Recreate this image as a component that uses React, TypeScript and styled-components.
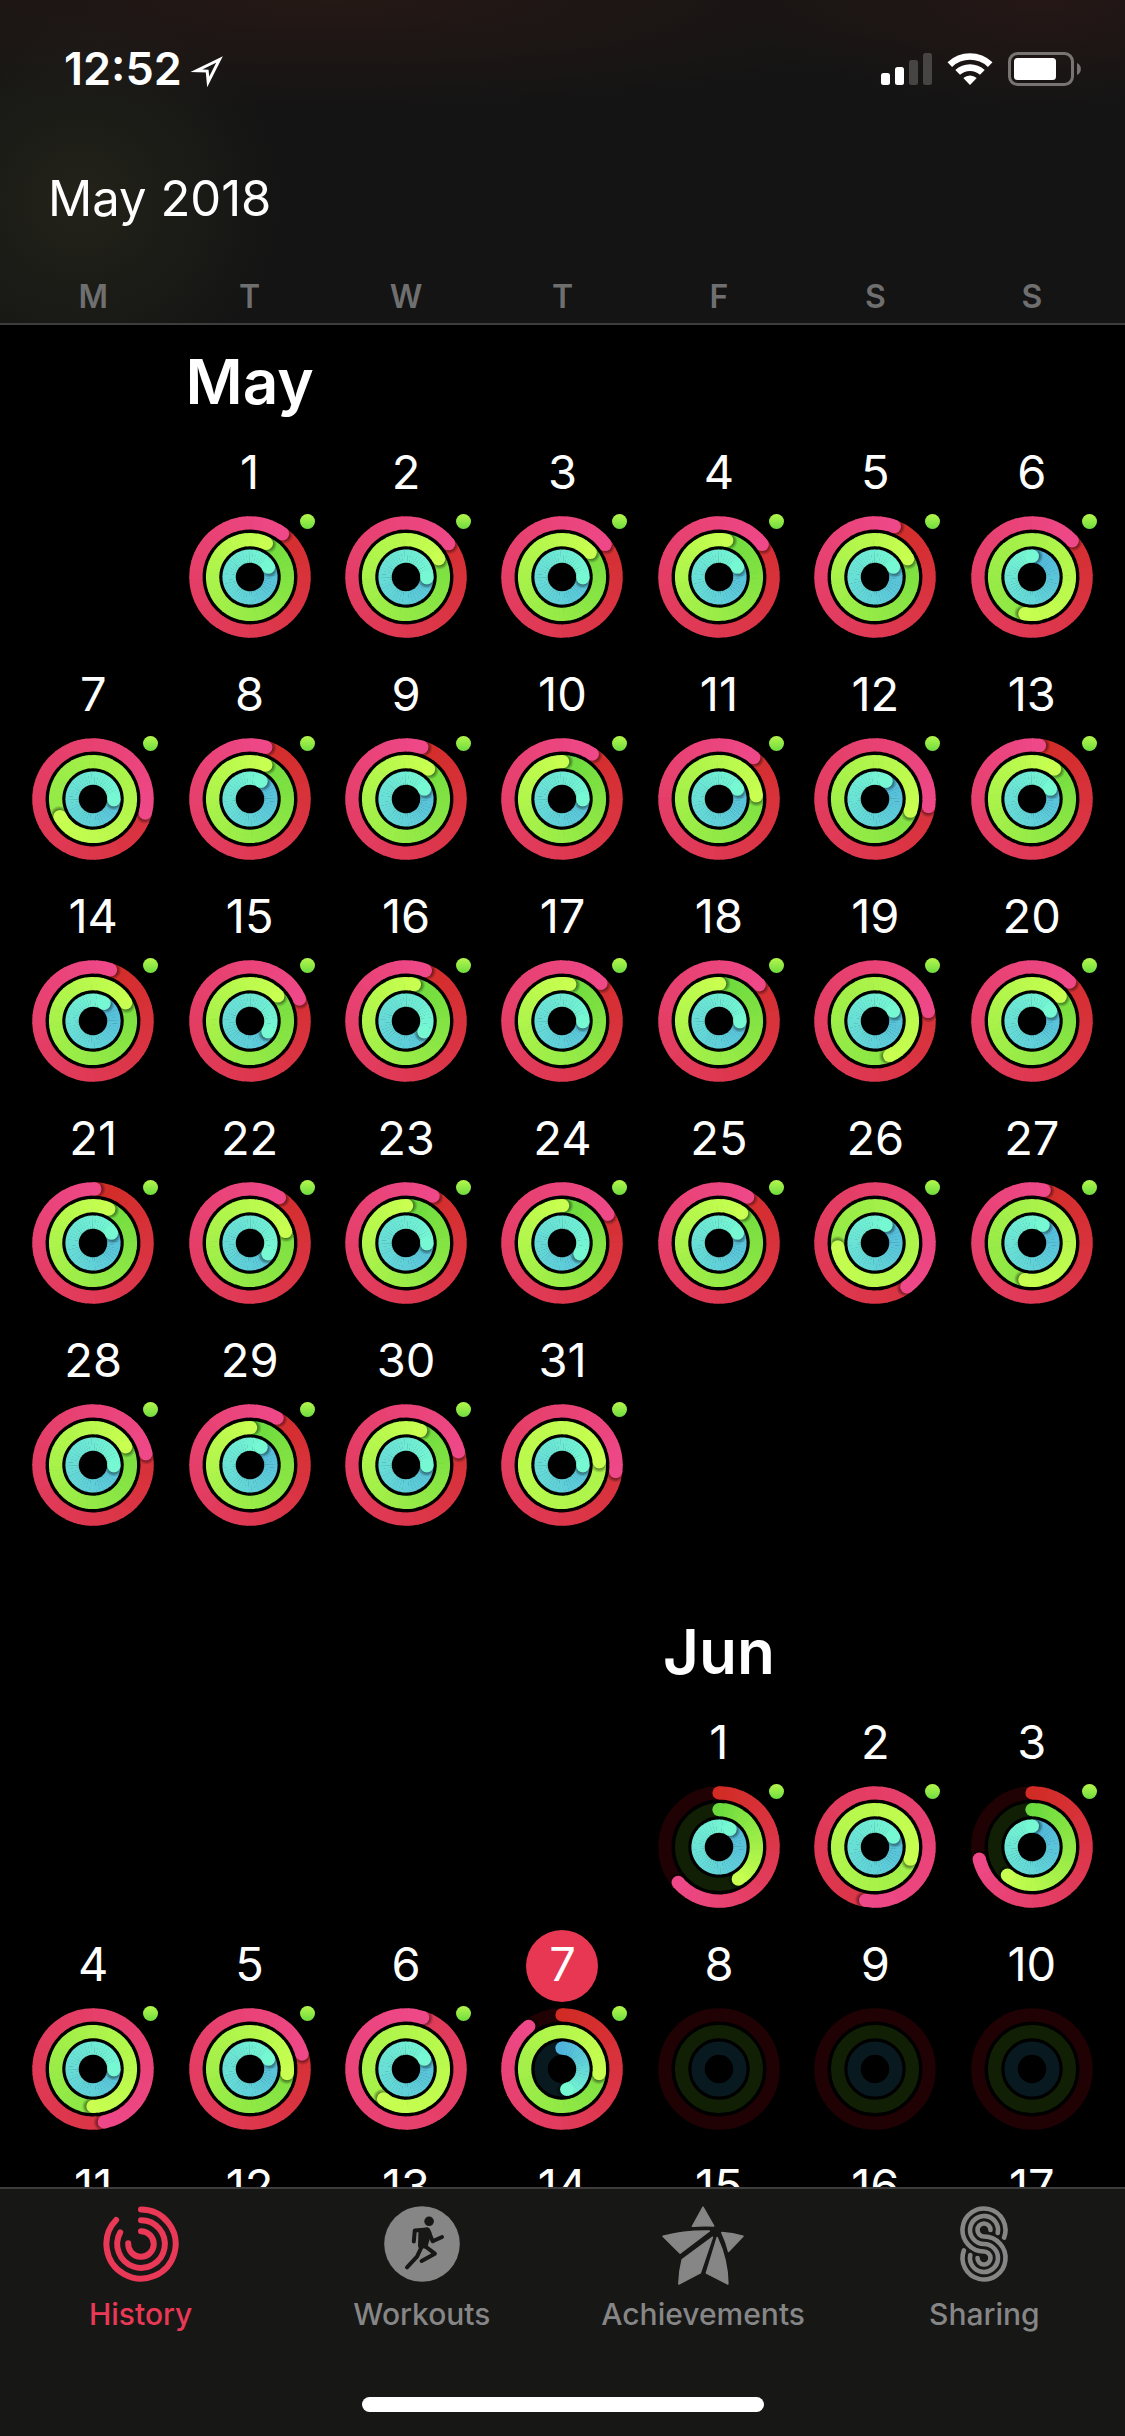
import React from "react";
import styled, { createGlobalStyle } from "styled-components";

const GlobalStyle = createGlobalStyle`
  * { box-sizing: border-box; }
  body {
    margin: 0;
    background: #000;
    color: #fff;
    font-family: Inter, "Liberation Sans", sans-serif;
  }
  button {
    margin: 0;
    padding: 0;
    border: 0;
    background: none;
    color: inherit;
    font: inherit;
    cursor: pointer;
  }
`;

const Screen = styled.div`
  display: flex;
  flex-direction: column;
  height: 100vh;
  overflow: hidden;
`;

const Header = styled.header`
  flex: none;
  padding-bottom: 6px;
  border-bottom: 2px solid #3d3d3d;
  background:
    radial-gradient(ellipse 200px 190px at 80px 200px, #23231a, transparent),
    radial-gradient(ellipse 640px 110px at 330px 0, #251815, transparent),
    radial-gradient(ellipse 300px 110px at 1040px 0, #251715, transparent),
    #141414;
`;

const StatusBar = styled.div`
  display: flex;
  align-items: center;
  justify-content: space-between;
  height: 138px;
  padding: 0 44px 0 64px;
`;

const StatusGroup = styled.div<{ $gap: number }>`
  display: flex;
  align-items: center;
  gap: ${(p) => p.$gap}px;
`;

const Clock = styled.time`
  font-size: 45px;
  line-height: 56px;
  font-weight: 600;
`;

const Title = styled.h1`
  margin: 0;
  padding: 29px 48px 0;
  font-size: 49px;
  line-height: 64px;
  font-weight: 400;
`;

const Weekdays = styled.div`
  display: grid;
  grid-template-columns: repeat(7, 1fr);
  margin-top: 46px;
  padding: 0 15px;
  color: #6f6f6f;
  font-size: 32px;
  line-height: 40px;
  font-weight: 600;
  text-align: center;
`;

const Calendar = styled.main`
  flex: 1;
  min-height: 0;
  display: flex;
  flex-direction: column;
  gap: 64px;
  padding: 17px 15px 0;
  overflow-y: auto;
  scrollbar-width: none;
`;

const MonthGrid = styled.section`
  flex: none;
  display: grid;
  grid-template-columns: repeat(7, 1fr);
`;

const MonthName = styled.h2<{ $column: number }>`
  grid-column: ${(p) => p.$column};
  margin: 0 0 16px;
  font-size: 62px;
  line-height: 80px;
  font-weight: 600;
  text-align: center;
`;

const DayCell = styled.button<{ $column?: number }>`
  grid-column-start: ${(p) => p.$column ?? "auto"};
  display: flex;
  flex-direction: column;
  align-items: center;
  gap: 6px;
  height: 222px;
`;

const DayNumber = styled.span<{ $today: boolean }>`
  flex: none;
  width: 72px;
  height: 72px;
  border-radius: 50%;
  background: ${(p) => (p.$today ? "#e73753" : "transparent")};
  font-size: 47px;
  line-height: 68px;
  text-align: center;
`;

const RingBox = styled.span`
  position: relative;
  flex: none;
  width: 122px;
  height: 122px;

  svg {
    display: block;
  }
`;

const WorkoutDot = styled.span`
  position: absolute;
  top: -2px;
  right: -4px;
  width: 15px;
  height: 15px;
  border-radius: 50%;
  background: linear-gradient(#b5f74c, #6fdc3f);
`;

const TabBar = styled.nav`
  flex: none;
  border-top: 2px solid #3d3d3d;
  background: #171716;
`;

const Tabs = styled.div`
  display: grid;
  grid-template-columns: repeat(4, 1fr);
  padding-top: 16px;
`;

const Tab = styled.button<{ $active?: boolean }>`
  display: flex;
  flex-direction: column;
  align-items: center;
  gap: 11px;
  color: ${(p) => (p.$active ? "#ea3857" : "#868686")};
  font-size: 30px;
  line-height: 36px;
  font-weight: 500;
`;

const HomeIndicator = styled.div`
  width: 402px;
  height: 15px;
  margin: 65px auto 24px;
  border-radius: 8px;
  background: #fff;
`;

type RGB = [number, number, number];

const RINGS: { radius: number; from: RGB; to: RGB; track: string }[] = [
  { radius: 54.1, from: [209, 43, 36], to: [238, 72, 137], track: "#200204" },
  { radius: 37.4, from: [108, 218, 62], to: [200, 255, 80], track: "#112005" },
  { radius: 20.9, from: [80, 180, 220], to: [118, 248, 211], track: "#081a20" },
];
const STROKE = 13.3;
const CENTER = 61;

const point = (radius: number, deg: number): [number, number] => {
  const a = (deg * Math.PI) / 180;
  return [CENTER + radius * Math.sin(a), CENTER - radius * Math.cos(a)];
};

const mix = (a: RGB, b: RGB, t: number) =>
  `rgb(${a.map((v, i) => Math.round(v + (b[i] - v) * t)).join(",")})`;

/* One activity ring; degrees counts every lap, so 360 is a closed ring. */
function Ring({ index, degrees }: { index: number; degrees: number }) {
  const { radius, from, to, track } = RINGS[index];
  if (degrees === 0) {
    return <circle cx={CENTER} cy={CENTER} r={radius} fill="none" stroke={track} strokeWidth={STROKE} />;
  }
  const start = Math.max(0, degrees - 360);
  const count = Math.ceil((degrees - start) / 8);
  const step = (degrees - start) / count;
  const pieces = Array.from({ length: count }, (_, i) => {
    const a = start + i * step;
    const b = Math.min(a + step + 1, degrees);
    const [x1, y1] = point(radius, a);
    const [x2, y2] = point(radius, b);
    return (
      <path
        key={i}
        d={`M${x1} ${y1}A${radius} ${radius} 0 0 1 ${x2} ${y2}`}
        fill="none"
        stroke={mix(from, to, (a + step / 2) / degrees)}
        strokeWidth={STROKE}
      />
    );
  });
  const [tipX, tipY] = point(radius, degrees);
  const [shadeX, shadeY] = point(radius, degrees + 120 / radius);
  const [capX, capY] = point(radius, 0);
  const tail = Math.max(0, count - 5);
  return (
    <g>
      {degrees < 360 && (
        <>
          <circle cx={CENTER} cy={CENTER} r={radius} fill="none" stroke={track} strokeWidth={STROKE} />
          <circle cx={capX} cy={capY} r={STROKE / 2} fill={mix(from, to, 0)} />
        </>
      )}
      {pieces.slice(0, tail)}
      <circle cx={shadeX} cy={shadeY} r={9} fill="url(#tip-shade)" />
      {pieces.slice(tail)}
      <circle cx={tipX} cy={tipY} r={STROKE / 2} fill={mix(from, to, 1)} />
    </g>
  );
}

type Day = { day: number; rings: [number, number, number]; today?: boolean };

const d = (day: number, move: number, exercise: number, stand: number, today = false): Day => ({
  day,
  rings: [move, exercise, stand],
  today,
});

const MAY: Day[] = [
  d(1, 397, 386, 422), d(2, 412, 421, 452), d(3, 413, 409, 452), d(4, 413, 372, 422),
  d(5, 381, 421, 422), d(6, 408, 551, 361),
  d(7, 465, 602, 452), d(8, 377, 385, 392), d(9, 377, 397, 422), d(10, 394, 361, 452),
  d(11, 400, 445, 422), d(12, 458, 469, 392), d(13, 368, 397, 422),
  d(14, 379, 421, 392), d(15, 426, 408, 481), d(16, 381, 373, 481), d(17, 406, 372, 452),
  d(18, 408, 361, 452), d(19, 440, 517, 422), d(20, 404, 409, 422),
  d(21, 362, 385, 422), d(22, 393, 432, 481), d(23, 390, 361, 452), d(24, 418, 361, 481),
  d(25, 392, 397, 422), d(26, 504, 624, 392), d(27, 373, 551, 392),
  d(28, 438, 421, 452), d(29, 390, 361, 392), d(30, 436, 383, 452), d(31, 457, 1165, 452),
];

const JUNE: Day[] = [
  d(1, 229, 149, 392), d(2, 550, 829, 422), d(3, 257, 221, 361),
  d(4, 528, 540, 452), d(5, 434, 457, 422), d(6, 738, 937, 422), d(7, 322, 457, 167, true),
  ...Array.from({ length: 10 }, (_, i) => d(8 + i, 0, 0, 0)),
];

const WEEKDAYS = ["M", "T", "W", "T", "F", "S", "S"];

function Month({ name, first, days }: { name: string; first: number; days: Day[] }) {
  return (
    <MonthGrid aria-label={name}>
      <MonthName $column={first}>{name}</MonthName>
      {days.map(({ day, rings, today }, i) => (
        <DayCell key={day} $column={i === 0 ? first : undefined} aria-current={today ? "date" : undefined}>
          <DayNumber $today={!!today}>{day}</DayNumber>
          <RingBox>
            <svg width="122" height="122" viewBox="0 0 122 122" aria-hidden="true">
              {rings.map((degrees, n) => (
                <Ring key={n} index={n} degrees={degrees} />
              ))}
            </svg>
            {rings[0] > 0 && <WorkoutDot />}
          </RingBox>
        </DayCell>
      ))}
    </MonthGrid>
  );
}

const HiddenDefs = styled.svg`
  position: absolute;
`;

function ShadeDefs() {
  return (
    <HiddenDefs width="0" height="0" aria-hidden="true">
      <defs>
        <radialGradient id="tip-shade">
          <stop offset="0.5" stopColor="#000" stopOpacity="0.5" />
          <stop offset="1" stopColor="#000" stopOpacity="0" />
        </radialGradient>
      </defs>
    </HiddenDefs>
  );
}

const LocationIcon = () => (
  <svg width="34" height="40" viewBox="0 0 34 40" aria-hidden="true">
    <path d="M29.5 10.5 6.500 21.700 17.200 22.100 18.200 33Z" fill="none" stroke="#fff" strokeWidth="3" strokeMiterlimit="10" />
  </svg>
);

const SignalIcon = () => (
  <svg width="52" height="34" viewBox="0 0 52 34" aria-hidden="true">
    <rect x="0" y="21" width="9" height="12" rx="2.500" fill="#fff" />
    <rect x="14" y="15" width="9" height="18" rx="2.500" fill="#fff" />
    <rect x="28" y="8" width="9" height="25" rx="2.500" fill="#474543" />
    <rect x="42" y="1" width="9" height="32" rx="2.500" fill="#474543" />
  </svg>
);

const WifiIcon = () => (
  <svg width="46" height="34" viewBox="0 0 46 34" aria-hidden="true">
    <path d="M0.500 10.300a32.500 32.500 0 0 1 45 0l-4.600 4.600a26 26 0 0 0-35.800 0Z" fill="#fff" />
    <path d="M8.300 18.100a21.400 21.400 0 0 1 29.400 0L33 22.800a14.800 14.800 0 0 0-20 0Z" fill="#fff" />
    <path d="M16.300 26a10.200 10.200 0 0 1 13.400 0L23 33Z" fill="#fff" />
  </svg>
);

const BatteryIcon = () => (
  <svg width="74" height="34" viewBox="-1 0 74 34" aria-hidden="true">
    <rect x="1.500" y="1.500" width="63" height="31" rx="8" fill="none" stroke="#777471" strokeWidth="3" />
    <rect x="6" y="6" width="42" height="22" rx="3.500" fill="#fff" />
    <path d="M69 11a6.600 6.600 0 0 1 0 12Z" fill="#777471" />
  </svg>
);

const HistoryIcon = () => (
  <svg width="84" height="80" viewBox="0 0 84 80" fill="none" stroke="currentColor" strokeWidth="6" strokeLinecap="round" aria-hidden="true">
    <path d="M42 4.400A34.600 34.600 0 1 1 17.100 15" />
    <path d="M42 15.200A23.800 23.800 0 1 1 21.200 27.500" />
    <path d="M42 26.200A12.800 12.800 0 1 1 29.200 38.300" />
  </svg>
);

const WorkoutsIcon = () => (
  <svg width="84" height="80" viewBox="0 0 84 80" aria-hidden="true">
    <circle cx="42" cy="39" r="37.800" fill="currentColor" />
    <g transform="translate(4 1)" fill="none" stroke="#171716" strokeWidth="4" strokeLinecap="round" strokeLinejoin="round">
      <circle cx="45.100" cy="15.300" r="4.800" fill="#171716" stroke="none" />
      <path d="M43 23.500 30.800 24.500 29.800 35.500" />
      <path d="M44 24 48.700 35.300 58 31" />
      <path d="M38.500 39 33 50.700 23 61.300" />
      <path d="M39.500 39 50.900 47.700 37.600 55" />
      <path d="M36.500 24.500 43.500 23.500 45.500 27 41.500 40.500 36 40Z" fill="#171716" />
    </g>
  </svg>
);

const AchievementsIcon = () => (
  <svg width="84" height="80" viewBox="0 0 84 80" fill="currentColor" stroke="currentColor" strokeWidth="1.500" strokeLinejoin="round" aria-hidden="true">
    <path d="M42 2.200 52.700 20.900Q42 20.200 31.400 21.300Z" />
    <path d="M2 31.300Q24 25.500 48.400 26L19.100 48.200Z" />
    <path d="M51.400 32.300 39.300 67.900 17.800 79Q18.200 66 21.200 54.500Z" />
    <path d="M56.200 32.500 45.400 68 66.900 79Q66.800 55 56.200 32.500Z" />
    <path d="M60.800 27.600Q72 28.300 82 31.300L67.500 46.400Q65 36 60.800 27.600Z" />
  </svg>
);

const SharingIcon = () => (
  <svg width="84" height="80" viewBox="0 0 84 80" fill="none" stroke="currentColor" strokeWidth="4.600" strokeLinecap="round" aria-hidden="true">
    <path d="M62.100 32.600A21.500 21.500 0 1 0 42 46.500A6.500 6.500 0 1 1 35.500 53" />
    <path d="M55.700 28A14 14 0 1 0 42 39A14 14 0 1 1 28.300 50" />
    <path d="M48.500 25A6.500 6.500 0 1 0 42 31.500A21.500 21.500 0 1 1 21.900 45.400" />
  </svg>
);

export default function App() {
  return (
    <Screen>
      <GlobalStyle />
      <ShadeDefs />
      <Header>
        <StatusBar>
          <StatusGroup $gap={8}>
            <Clock>12:52</Clock>
            <LocationIcon />
          </StatusGroup>
          <StatusGroup $gap={14}>
            <SignalIcon />
            <WifiIcon />
            <BatteryIcon />
          </StatusGroup>
        </StatusBar>
        <Title>May 2018</Title>
        <Weekdays>
          {WEEKDAYS.map((letter, i) => (
            <span key={i}>{letter}</span>
          ))}
        </Weekdays>
      </Header>
      <Calendar>
        <Month name="May" first={2} days={MAY} />
        <Month name="Jun" first={5} days={JUNE} />
      </Calendar>
      <TabBar>
        <Tabs>
          <Tab $active aria-current="page">
            <HistoryIcon />
            History
          </Tab>
          <Tab>
            <WorkoutsIcon />
            Workouts
          </Tab>
          <Tab>
            <AchievementsIcon />
            Achievements
          </Tab>
          <Tab>
            <SharingIcon />
            Sharing
          </Tab>
        </Tabs>
        <HomeIndicator />
      </TabBar>
    </Screen>
  );
}
